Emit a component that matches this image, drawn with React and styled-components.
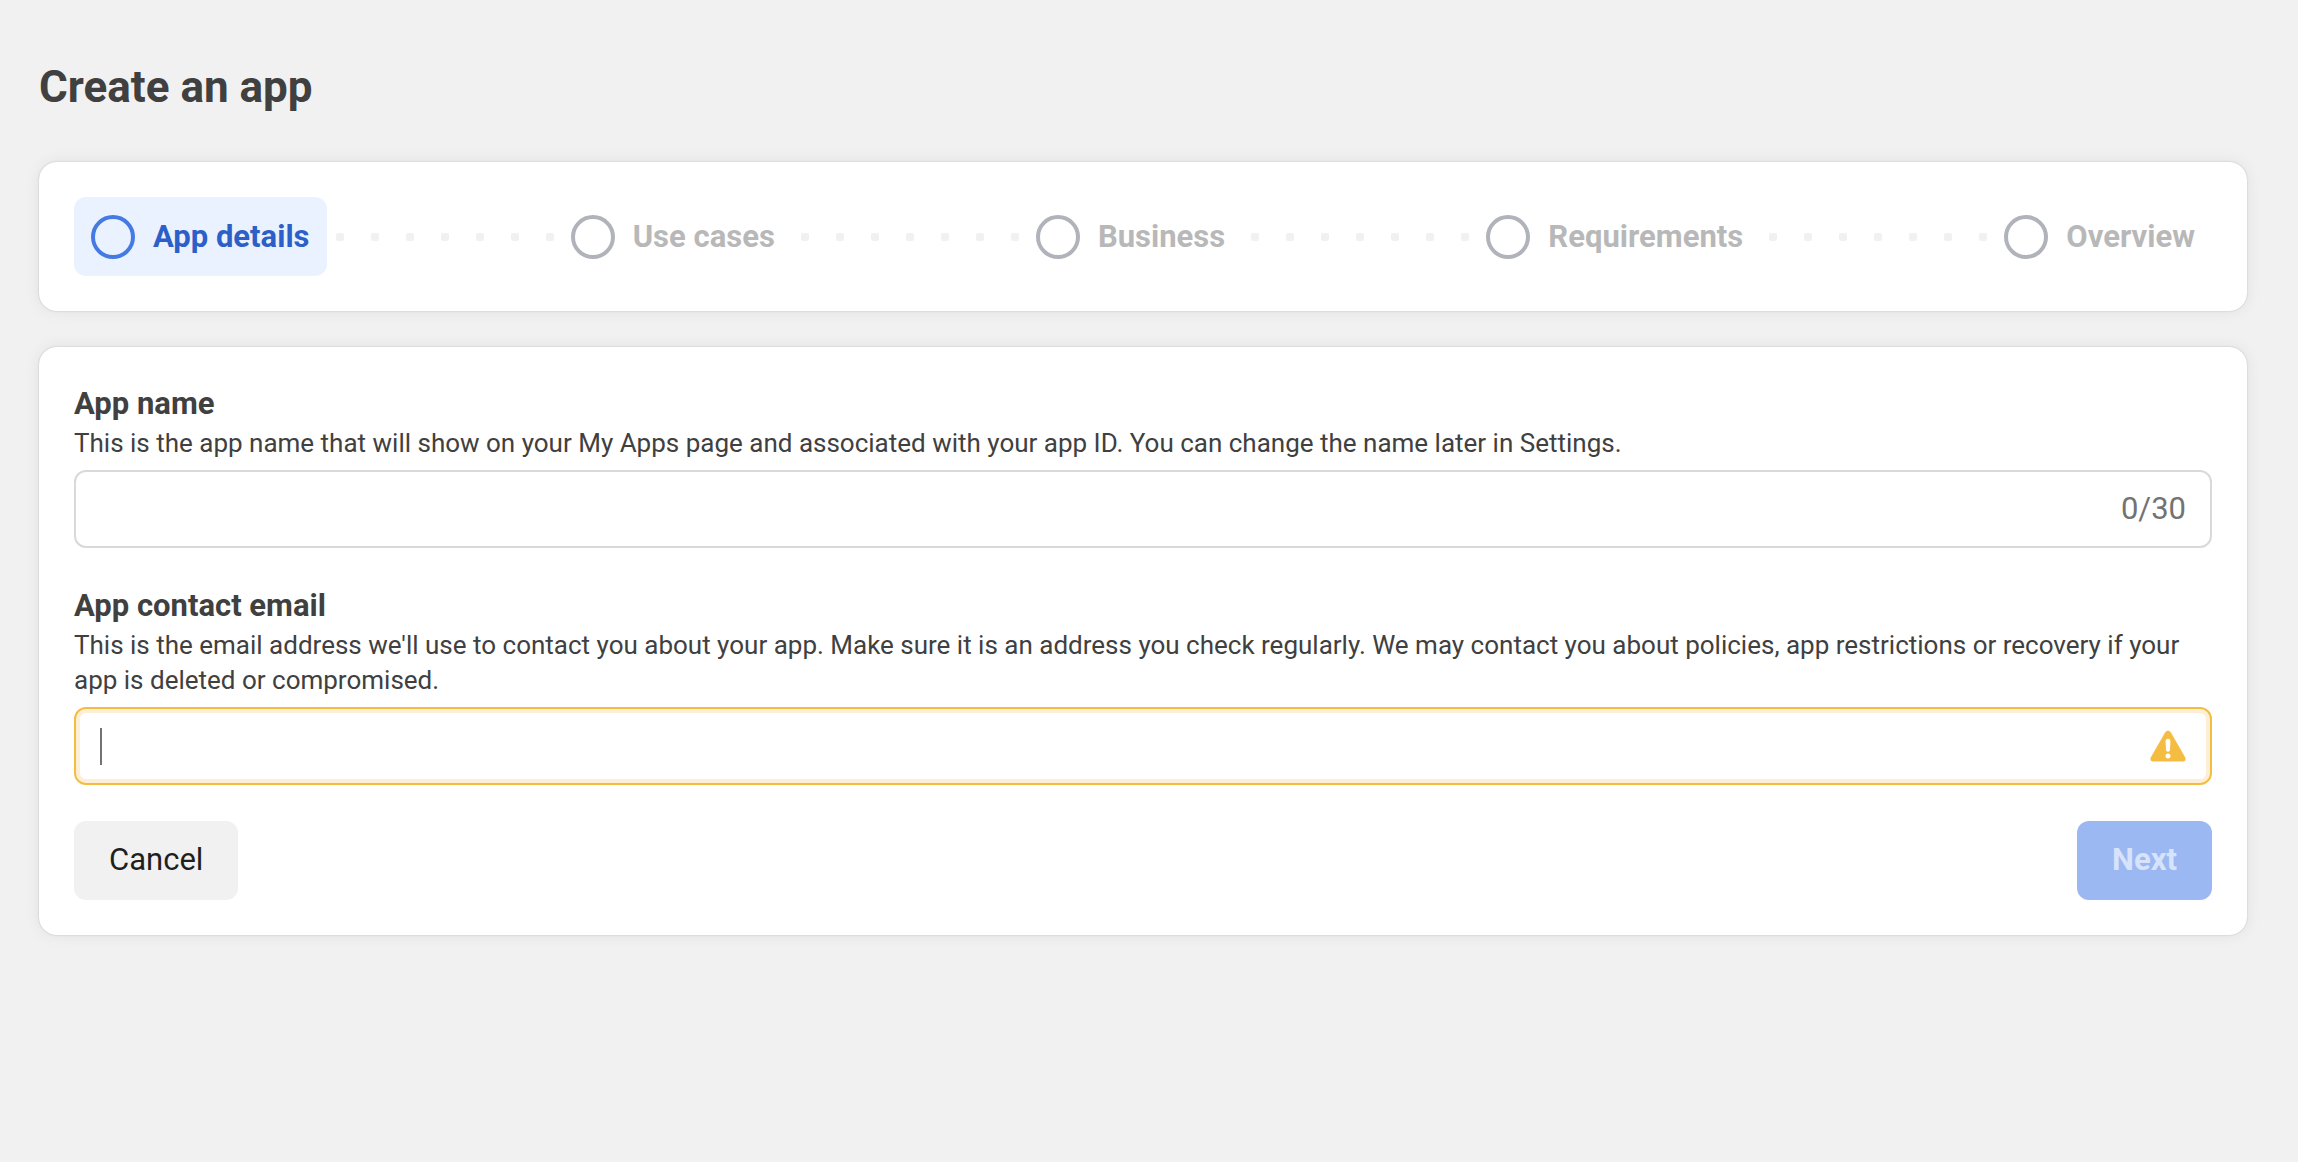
import React, { useState } from "react";
import styled, { createGlobalStyle } from "styled-components";

const GlobalStyle = createGlobalStyle`
  *, *::before, *::after { box-sizing: border-box; }
  body {
    margin: 0;
    background: #f1f1f1;
    color: #404040;
    font-family: Roboto, "Liberation Sans", sans-serif;
  }
  button, input { font: inherit; color: inherit; }
`;

const Page = styled.main`
  min-height: 100vh;
  padding: 60px 51px 60px 39px;
`;

const Title = styled.h1`
  margin: 0 0 48px;
  font-size: 44px;
  line-height: 54px;
  font-weight: 700;
`;

const Card = styled.section`
  padding: 35px;
  border-radius: 18px;
  background: #fff;
  box-shadow: 0 0 2px rgba(0, 0, 0, 0.2), 0 0 16px rgba(0, 0, 0, 0.07);
  & + & { margin-top: 36px; }
`;

const Steps = styled.ol`
  display: flex;
  align-items: center;
  margin: 0;
  padding: 0;
  list-style: none;
`;

const Step = styled.li`
  display: flex;
  align-items: center;
  gap: 18px;
  height: 79px;
  padding: 0 17px;
  border-radius: 12px;
  font-size: 31px;
  line-height: 40px;
  font-weight: 700;
  background: ${(p) => (p.$active ? "#ebf2ff" : "transparent")};
  color: ${(p) => (p.$active ? "#2c5fc7" : "#b8b8b8")};
`;

const Ring = styled.span`
  width: 44px;
  height: 44px;
  border: 4px solid ${(p) => (p.$active ? "#467ae3" : "#b0b3b9")};
  border-radius: 50%;
`;

const Dots = styled.li`
  display: flex;
  flex: 1;
  justify-content: space-between;
  margin-left: 9px;
`;

const Dot = styled.i`
  width: 8px;
  height: 8px;
  border-radius: 2px;
  background: #f1f1f1;
`;

const Field = styled.div`
  margin-bottom: 36px;
`;

const Label = styled.label`
  display: block;
  font-size: 31px;
  line-height: 44px;
  font-weight: 700;
`;

const Hint = styled.p`
  margin: 0 0 9px;
  font-size: 26px;
  line-height: 35px;
`;

const InputBox = styled.div`
  display: flex;
  align-items: center;
  height: 78px;
  padding: 0 24px;
  border: 2px solid ${(p) => (p.$warning ? "#f5bc42" : "#d9d9d9")};
  border-radius: 12px;
  background: #fff;
  box-shadow: ${(p) => (p.$warning ? "inset 0 0 0 4px #fdefd5" : "none")};
`;

const Input = styled.input`
  flex: 1;
  min-width: 0;
  height: 44px;
  padding: 0;
  border: 0;
  outline: 0;
  background: transparent;
  font-size: 31px;
`;

const Caret = styled.span`
  width: 2px;
  height: 37px;
  background: #737373;
`;

const Counter = styled.span`
  font-size: 31px;
  line-height: 40px;
  color: #737373;
`;

const Actions = styled.div`
  display: flex;
  justify-content: space-between;
`;

const Button = styled.button`
  height: 79px;
  padding: 0 35px 2px;
  border: 0;
  border-radius: 12px;
  font-size: 31px;
  line-height: 40px;
  font-weight: ${(p) => (p.$primary ? 700 : 400)};
  background: ${(p) => (p.$primary ? "#9bb8f2" : "#f1f1f1")};
  color: ${(p) => (p.$primary ? "#d7e3fb" : "#1f1f1f")};
`;

const steps = ["App details", "Use cases", "Business", "Requirements", "Overview"];

function WarningIcon() {
  return (
    <svg width="36" height="32" viewBox="0 0 36 32" role="img" aria-label="Warning">
      <path
        d="M15.2 2.2C16.4.1 19.6.1 20.8 2.2L35.1 27.2C36.3 29.2 35.3 31.4 33 31.4H3C.7 31.4-.3 29.2.9 27.2Z"
        fill="#f5bc42"
      />
      <path
        d="M15.6 11.2C15.5 9.7 16.5 8.8 18 8.8S20.5 9.7 20.4 11.2L20 19.8C19.9 21 19.1 21.7 18 21.7S16.1 21 16 19.8Z"
        fill="#fff"
      />
      <circle cx="18" cy="25.9" r="2.5" fill="#fff" />
    </svg>
  );
}

function StepDots() {
  return (
    <Dots aria-hidden="true">
      {Array.from({ length: 7 }, (_, i) => (
        <Dot key={i} />
      ))}
    </Dots>
  );
}

export default function App() {
  const [name, setName] = useState("");
  const [email, setEmail] = useState("");
  return (
    <>
      <GlobalStyle />
      <Page>
        <Title>Create an app</Title>
        <Card>
          <Steps>
            {steps.map((step, i) => (
              <React.Fragment key={step}>
                {i > 0 && <StepDots />}
                <Step $active={i === 0} aria-current={i === 0 ? "step" : undefined}>
                  <Ring $active={i === 0} />
                  {step}
                </Step>
              </React.Fragment>
            ))}
          </Steps>
        </Card>
        <Card as="form" onSubmit={(e) => e.preventDefault()}>
          <Field>
            <Label htmlFor="app-name">App name</Label>
            <Hint>
              This is the app name that will show on your My Apps page and associated with your app
              ID. You can change the name later in Settings.
            </Hint>
            <InputBox>
              <Input
                id="app-name"
                type="text"
                maxLength={30}
                value={name}
                onChange={(e) => setName(e.target.value)}
              />
              <Counter>{name.length}/30</Counter>
            </InputBox>
          </Field>
          <Field>
            <Label htmlFor="app-email">App contact email</Label>
            <Hint>
              This is the email address we'll use to contact you about your app. Make sure it is an
              address you check regularly. We may contact you about policies, app restrictions or
              recovery if your app is deleted or compromised.
            </Hint>
            <InputBox $warning>
              {email === "" && <Caret />}
              <Input
                id="app-email"
                type="email"
                value={email}
                onChange={(e) => setEmail(e.target.value)}
              />
              <WarningIcon />
            </InputBox>
          </Field>
          <Actions>
            <Button type="button">Cancel</Button>
            <Button type="submit" $primary disabled>
              Next
            </Button>
          </Actions>
        </Card>
      </Page>
    </>
  );
}
